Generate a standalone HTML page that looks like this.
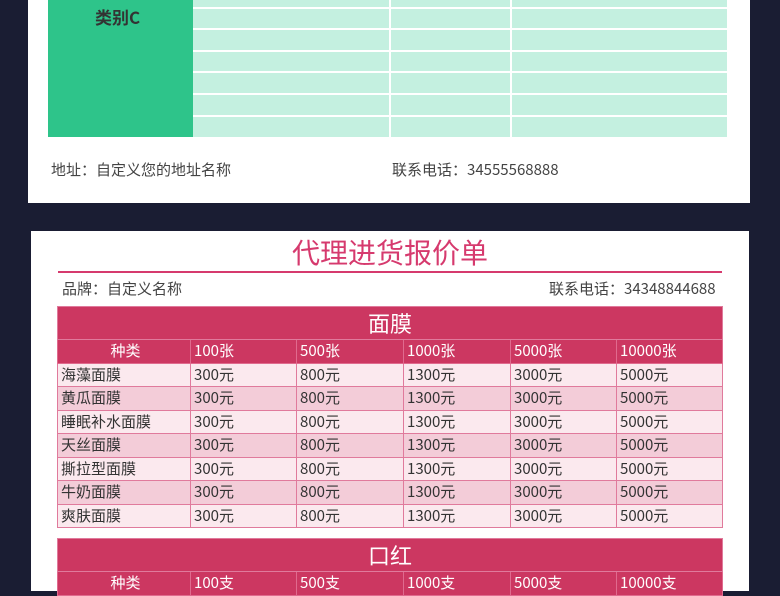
<!DOCTYPE html><html><head><meta charset="utf-8"><style>
*{margin:0;padding:0;box-sizing:border-box}
body{width:780px;height:585px;overflow:hidden;background:#1a1d33;font-family:"Noto Sans CJK SC","Liberation Sans",sans-serif;position:relative}
.a{position:absolute}
.card1{left:28px;top:-5px;width:722px;height:208px;background:#fff}
.green{left:48px;top:0;width:145px;height:137px;background:#2ec48a}
.mint{left:193px;top:0;width:534px;height:137px;background:#c4f0e0}
.hl{left:193px;width:534px;height:2px;background:#fff}
.vl{top:0;width:2px;height:137px;background:#fff}
.t{color:#444;font-size:15px;line-height:18px}
.card2{left:31px;top:231px;width:718px;height:360px;background:#fff}
table{position:absolute;left:57px;width:665px;border-collapse:collapse;table-layout:fixed}
td{border:1px solid #e07a9c;font-size:15px;color:#333;padding:0 0 0 3px;height:23.5px;line-height:20px;white-space:nowrap;overflow:hidden}
.ti td{background:#cc3761;color:#fff;font-size:22px;text-align:center;height:33px;padding:0;line-height:30px}
.hd td{background:#cc3761;color:#fff;border-color:#e06a8e}
.hd td:first-child{text-align:center}
.r1 td{background:#fbe9ee}.r2 td{background:#f3ccd8}
</style></head><body>
<div class="a card1"></div>
<div class="a green"></div>
<div class="a mint"></div>
<div class="a hl" style="top:7px"></div><div class="a hl" style="top:28px"></div><div class="a hl" style="top:50px"></div><div class="a hl" style="top:71px"></div><div class="a hl" style="top:93px"></div><div class="a hl" style="top:115px"></div>
<div class="a vl" style="left:389px"></div><div class="a vl" style="left:510px"></div>
<div class="a" style="left:95px;top:6px;font-size:17px;line-height:22px;font-weight:bold;color:#333">类别C</div>
<div class="a t" style="left:51px;top:161px">地址：自定义您的地址名称</div>
<div class="a t" style="left:392px;top:161px">联系电话：34555568888</div>
<div class="a card2"></div>
<div class="a" style="left:0;width:780px;top:234px;text-align:center;font-size:28px;line-height:36px;color:#d63a6e">代理进货报价单</div>
<div class="a" style="left:58px;top:271px;width:664px;height:2px;background:#d63a6e"></div>
<div class="a t" style="left:62px;top:280px">品牌：自定义名称</div>
<div class="a t" style="left:549px;top:280px">联系电话：34348844688</div>
<table style="top:306px">
<colgroup><col style="width:133px"><col style="width:106px"><col style="width:107px"><col style="width:107px"><col style="width:106px"><col style="width:106px"></colgroup>
<tr class="ti"><td colspan="6">面膜</td></tr>
<tr class="hd"><td>种类</td><td>100张</td><td>500张</td><td>1000张</td><td>5000张</td><td>10000张</td></tr>
<tr class="r1"><td>海藻面膜</td><td>300元</td><td>800元</td><td>1300元</td><td>3000元</td><td>5000元</td></tr>
<tr class="r2"><td>黄瓜面膜</td><td>300元</td><td>800元</td><td>1300元</td><td>3000元</td><td>5000元</td></tr>
<tr class="r1"><td>睡眠补水面膜</td><td>300元</td><td>800元</td><td>1300元</td><td>3000元</td><td>5000元</td></tr>
<tr class="r2"><td>天丝面膜</td><td>300元</td><td>800元</td><td>1300元</td><td>3000元</td><td>5000元</td></tr>
<tr class="r1"><td>撕拉型面膜</td><td>300元</td><td>800元</td><td>1300元</td><td>3000元</td><td>5000元</td></tr>
<tr class="r2"><td>牛奶面膜</td><td>300元</td><td>800元</td><td>1300元</td><td>3000元</td><td>5000元</td></tr>
<tr class="r1"><td>爽肤面膜</td><td>300元</td><td>800元</td><td>1300元</td><td>3000元</td><td>5000元</td></tr>
</table>
<table style="top:538px">
<colgroup><col style="width:133px"><col style="width:106px"><col style="width:107px"><col style="width:107px"><col style="width:106px"><col style="width:106px"></colgroup>
<tr class="ti"><td colspan="6">口红</td></tr>
<tr class="hd"><td>种类</td><td>100支</td><td>500支</td><td>1000支</td><td>5000支</td><td>10000支</td></tr>
</table>
</body></html>
